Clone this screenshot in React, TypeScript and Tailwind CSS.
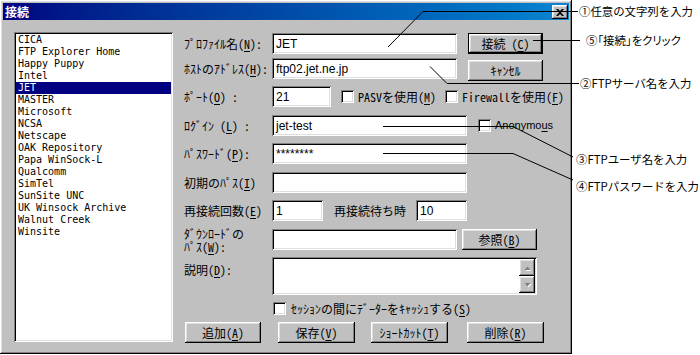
import React from "react";

const raised =
  "shadow-[inset_-1px_-1px_0_#000,inset_1px_1px_0_#fff,inset_-2px_-2px_0_#808080,inset_2px_2px_0_#dfdfdf]";
const sunken =
  "shadow-[inset_1px_1px_0_#808080,inset_-1px_-1px_0_#fff,inset_2px_2px_0_#000,inset_-2px_-2px_0_#dfdfdf]";
const jp = "font-['Noto_Sans_Mono_CJK_JP','Noto_Sans_CJK_JP',sans-serif]";

const sites = [
  "CICA",
  "FTP Explorer Home",
  "Happy Puppy",
  "Intel",
  "JET",
  "MASTER",
  "Microsoft",
  "NCSA",
  "Netscape",
  "OAK Repository",
  "Papa WinSock-L",
  "Qualcomm",
  "SimTel",
  "SunSite UNC",
  "UK Winsock Archive",
  "Walnut Creek",
  "Winsite",
];

function K({ c }: { c: string }) {
  return <span className="underline underline-offset-2">{c}</span>;
}

function Label({ children }: { children: React.ReactNode }) {
  return <div className="w-[88px] shrink-0 whitespace-nowrap text-[12px] leading-[14px]">{children}</div>;
}

function Field({ className = "", children }: { className?: string; children?: React.ReactNode }) {
  return (
    <div
      className={`flex h-[21px] shrink-0 items-center bg-white pl-[4px] pt-[1px] font-['Liberation_Sans',Arial,sans-serif] text-[12px] text-black ${sunken} ${className}`}
    >
      {children}
    </div>
  );
}

function Btn({ className = "", children }: { className?: string; children: React.ReactNode }) {
  return (
    <div
      className={`flex h-[21px] shrink-0 items-center justify-center whitespace-nowrap bg-[#c0c0c0] text-[12px] text-black ${raised} ${className}`}
    >
      {children}
    </div>
  );
}

function Check() {
  return <div className={`h-[13px] w-[13px] shrink-0 bg-white ${sunken}`} />;
}

function ScrollBtn({ up }: { up?: boolean }) {
  return (
    <div className={`flex h-[17px] w-[16px] items-center justify-center bg-[#c0c0c0] ${raised}`}>
      <svg width="9" height="6" viewBox="0 0 9 6">
        {up ? (
          <>
            <polygon points="1.5,5.5 4.5,2 7.5,5.5" fill="#fff" transform="translate(1,1)" />
            <polygon points="1.5,5 4.5,1.5 7.5,5" fill="#808080" />
          </>
        ) : (
          <>
            <polygon points="1.5,1 4.5,4.5 7.5,1" fill="#fff" transform="translate(1,1)" />
            <polygon points="1.5,1 4.5,4.5 7.5,1" fill="#808080" />
          </>
        )}
      </svg>
    </div>
  );
}

export default function App() {
  return (
    <div className="relative flex h-[355px] w-[700px] overflow-hidden bg-white text-black">
      {/* dialog */}
      <div className={`flex h-[354px] w-[572px] shrink-0 flex-col bg-[#c0c0c0] p-[3px] ${jp} ${raised}`}>
        <div className="flex h-[17px] items-start justify-between bg-linear-to-r from-[#000080] to-[#1084d0] pl-[2px] pr-[1px]">
          <span className="text-[12px] font-bold leading-[17px] text-white">接続</span>
          <div className={`mt-[2px] flex h-[14px] w-[16px] items-center justify-center bg-[#c0c0c0] ${raised}`}>
            <svg width="8" height="7" viewBox="0 0 8 7">
              <path d="M0 0h2l2 2 2-2h2L5 3.5 8 7H6L4 5 2 7H0l3-3.5z" fill="#000" />
            </svg>
          </div>
        </div>

        <div className="flex">
          {/* site list */}
          <div className={`ml-[11px] mt-[12px] h-[310px] w-[159px] shrink-0 bg-white p-[2px] ${sunken}`}>
            {sites.map((s) => (
              <div
                key={s}
                className={`h-[12px] whitespace-pre pl-[2px] font-['DejaVu_Sans_Mono',monospace] text-[10px] leading-[12px] ${
                  s === "JET" ? "bg-[#000080] text-white" : "text-black"
                }`}
              >
                {s}
              </div>
            ))}
          </div>

          {/* form */}
          <div className="ml-[11px] mt-[13px] flex flex-col text-[12px]">
            <div className="flex h-[21px] items-center">
              <Label>
                ﾌﾟﾛﾌｧｲﾙ名(<K c="N" />):
              </Label>
              <Field className="w-[185px]">JET</Field>
              <Btn className="ml-[11px] w-[75px] border border-black">
                接続 (<K c="C" />)
              </Btn>
            </div>

            <div className="mt-[4px] flex h-[21px] items-center">
              <Label>
                ﾎｽﾄのｱﾄﾞﾚｽ(<K c="H" />):
              </Label>
              <Field className="w-[185px]">ftp02.jet.ne.jp</Field>
              <Btn className="ml-[11px] mt-[2px] h-[20px] w-[75px] self-start">ｷｬﾝｾﾙ</Btn>
            </div>

            <div className="mt-[7px] flex h-[21px] items-center">
              <Label>
                ﾎﾟｰﾄ(<K c="O" />) :
              </Label>
              <Field className="w-[59px]">21</Field>
              <div className="ml-[10px] flex w-[104px] items-center">
                <Check />
                <span className="ml-[4px] whitespace-nowrap">
                  PASVを使用(<K c="M" />)
                </span>
              </div>
              <div className="flex items-center">
                <Check />
                <span className="ml-[4px] whitespace-nowrap">
                  Firewallを使用(<K c="F" />)
                </span>
              </div>
            </div>

            <div className="mt-[8px] flex h-[21px] items-center">
              <Label>
                ﾛｸﾞｲﾝ (<K c="L" />) :
              </Label>
              <Field className="w-[195px]">jet-test</Field>
              <div className="ml-[11px]">
                <Check />
              </div>
              <span className="ml-[4px] font-['Liberation_Sans',Arial,sans-serif] text-[11px]">
                Anonymo<K c="u" />s
              </span>
            </div>

            <div className="mt-[7px] flex h-[21px] items-center">
              <Label>
                ﾊﾟｽﾜｰﾄﾞ(<K c="P" />):
              </Label>
              <Field className="w-[195px]">********</Field>
            </div>

            <div className="mt-[8px] flex h-[21px] items-center">
              <Label>
                初期のﾊﾟｽ(<K c="I" />)
              </Label>
              <Field className="w-[195px]" />
            </div>

            <div className="mt-[7px] flex h-[21px] items-center">
              <Label>
                再接続回数(<K c="E" />)
              </Label>
              <Field className="w-[51px]">1</Field>
              <div className="ml-[11px] w-[82px] whitespace-nowrap">再接続待ち時</div>
              <Field className="w-[51px]">10</Field>
            </div>

            <div className="mt-[8px] flex h-[21px] items-center">
              <div className="w-[88px] shrink-0 whitespace-nowrap text-[12px] leading-[13px]">
                <div>ﾀﾞｳﾝﾛｰﾄﾞの</div>
                <div>
                  ﾊﾟｽ(<K c="W" />):
                </div>
              </div>
              <Field className="w-[185px]" />
              <Btn className="ml-[5px] w-[75px]">
                参照(<K c="B" />)
              </Btn>
            </div>

            <div className="mt-[7px] flex h-[38px] items-start">
              <div className="w-[88px] shrink-0 pt-[6px] leading-[14px]">
                説明(<K c="D" />):
              </div>
              <div className={`flex h-[38px] w-[265px] flex-col items-end bg-white p-[2px] ${sunken}`}>
                <ScrollBtn up />
                <ScrollBtn />
              </div>
            </div>

            <div className="mt-[7px] flex h-[13px] items-center">
              <div className="w-[89px] shrink-0" />
              <Check />
              <span className="ml-[5px] whitespace-nowrap leading-[13px]">
                ｾｯｼｮﾝの間にﾃﾞｰﾀｰをｷｬｯｼｭする(<K c="S" />)
              </span>
            </div>

            <div className="mt-[7px] flex h-[21px] items-center">
              <Btn className="ml-[1px] w-[76px]">
                追加(<K c="A" />)
              </Btn>
              <Btn className="ml-[17px] w-[77px]">
                保存(<K c="V" />)
              </Btn>
              <Btn className="ml-[16px] w-[77px]">
                ｼｮｰﾄｶｯﾄ(<K c="T" />)
              </Btn>
              <Btn className="ml-[19px] w-[77px]">
                削除(<K c="R" />)
              </Btn>
            </div>
          </div>
        </div>
      </div>

      {/* callouts */}
      <div className="flex flex-col font-['Noto_Sans_CJK_JP',sans-serif] text-[11.4px] leading-[16px]">
        <div className="ml-[7px] mt-[3px] whitespace-nowrap">①任意の文字列を入力</div>
        <div className="ml-[14px] mt-[13px] whitespace-nowrap [font-feature-settings:'palt']">
          ⑤「接続」をクリック
        </div>
        <div className="ml-[8px] mt-[27px] whitespace-nowrap">②FTPサーバ名を入力</div>
        <div className="ml-[4px] mt-[60px] whitespace-nowrap">③FTPユーザ名を入力</div>
        <div className="ml-[4px] mt-[11px] whitespace-nowrap">④FTPパスワードを入力</div>
      </div>

      <svg
        className="pointer-events-none absolute left-0 top-0"
        width="700"
        height="355"
        viewBox="0 0 700 355"
        fill="none"
        stroke="#000"
        strokeWidth="1"
      >
        <polyline points="388,47 423,11.5 578,11.5" />
        <line x1="533" y1="40.5" x2="580" y2="40.5" />
        <polyline points="430,66.5 447,83.5 579,83.5" />
        <polyline points="383,126.5 513,126.5 573,157" />
        <polyline points="383,153.5 513,153.5 573,180" />
      </svg>
    </div>
  );
}
